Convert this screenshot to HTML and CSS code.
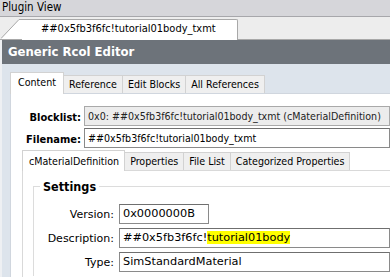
FILE: index.html
```html
<!DOCTYPE html>
<html lang="en">

<head>
    <meta charset="UTF-8">
    <title>Plugin View</title>
    <link rel="stylesheet" href="styles.css">
</head>

<body>
    <div class="plugin-title">Plugin View</div>
    <div class="doc-tabs">
        <div class="doc-tab">
            <svg class="doc-tab-slant" width="21" height="20" viewBox="0 0 21 20">
                <polygon points="0,20 18,0.5 21,0.5 21,20" fill="#fff" />
                <polyline points="0,19.5 18,0.5 21,0.5" fill="none" stroke="#a8a8a8" stroke-width="1" />
            </svg>
            <div class="doc-tab-body">##0x5fb3f6fc!tutorial01body_txmt</div>
        </div>
    </div>

    <div class="editor">
        <div class="editor-title">Generic Rcol Editor</div>
        <div class="editor-body">
            <ul class="tabs main-tabs">
                <li class="cur">Content</li>
                <li>Reference</li>
                <li>Edit Blocks</li>
                <li>All References</li>
            </ul>
            <div class="panel">
                <div class="field">
                    <label>Blocklist:</label>
                    <div class="box readonly">0x0: ##0x5fb3f6fc!tutorial01body_txmt (cMaterialDefinition)</div>
                </div>
                <div class="field">
                    <label>Filename:</label>
                    <div class="box">##0x5fb3f6fc!tutorial01body_txmt</div>
                </div>

                <ul class="tabs sub-tabs">
                    <li class="cur">cMaterialDefinition</li>
                    <li>Properties</li>
                    <li>File List</li>
                    <li>Categorized Properties</li>
                </ul>
                <div class="sub-panel">
                    <fieldset class="group">
                        <legend>Settings</legend>
                        <div class="row">
                            <span class="row-label">Version:</span>
                            <div class="box short">0x0000000B</div>
                        </div>
                        <div class="row">
                            <span class="row-label">Description:</span>
                            <div class="box">##0x5fb3f6fc!<span class="hl">tutorial01body</span></div>
                        </div>
                        <div class="row">
                            <span class="row-label">Type:</span>
                            <div class="box">SimStandardMaterial</div>
                        </div>
                    </fieldset>
                </div>
            </div>
        </div>
    </div>
</body>

</html>
```

FILE: styles.css
```css
* {
    box-sizing: border-box;
}

html,
body {
    margin: 0;
    padding: 0;
    overflow: hidden;
}

body {
    width: 390px;
    height: 277px;
    background-color: #eef0f3;
    font-family: "DejaVu Sans Condensed", "DejaVu Sans", sans-serif;
    font-size: 10.6px;
    color: #000;
}

/* top strip */
.plugin-title {
    height: 17px;
    line-height: 15px;
    padding-left: 2px;
    font-size: 11.5px;
    background-color: #d6d6da;
    border-bottom: 1px solid #a7a7ab;
}

.doc-tabs {
    height: 23px;
    padding-top: 2px;
    background-color: #ededed;
    border-bottom: 1px solid #a8a8a8;
    display: flex;
}

.doc-tab {
    display: flex;
    height: 21px;
    margin-bottom: -1px;
}

.doc-tab-slant {
    display: block;
    margin-left: 1px;
}

.doc-tab-body {
    width: 216px;
    background-color: #fff;
    border-top: 1px solid #a8a8a8;
    border-right: 1px solid #a8a8a8;
    border-top-right-radius: 2px;
    padding-left: 19px;
    line-height: 18px;
    font-size: 11px;
}

/* editor */
.editor {
    margin-left: 2px;
}

.editor-title {
    height: 24px;
    line-height: 24px;
    padding-left: 6px;
    background-color: #6d737a;
    color: #fff;
    font-weight: bold;
    font-size: 13px;
}

.editor-body {
    height: 213px;
    background-color: #dde4ec;
    padding: 8px 0 0 8px;
}

.tabs {
    margin: 0;
    padding: 0;
    list-style-type: none;
    display: flex;
    align-items: flex-end;
    position: relative;
    z-index: 1;
}

.tabs li {
    height: 18px;
    line-height: 16px;
    padding: 0 5px;
    background-color: #efefef;
    border: 1px solid #d2d2d2;
    border-bottom: none;
    margin-right: -1px;
}

.tabs li.cur {
    height: 22px;
    line-height: 19px;
    background-color: #fff;
    margin-bottom: -1px;
    padding: 0 6px 0 7px;
}

.main-tabs li.cur {
    width: 54px;
}

.panel {
    background-color: #fff;
    border: 1px solid #d0d6de;
    border-right: none;
    height: 193px;
    padding: 12px 0 0 0;
}

.field {
    display: flex;
    align-items: center;
    margin-bottom: 2px;
}

.field label {
    width: 73px;
    text-align: right;
    font-weight: bold;
    font-size: 11px;
    padding-right: 3px;
    padding-top: 2px;
}

.box {
    flex: 1;
    height: 20px;
    line-height: 18px;
    padding-left: 3px;
    border: 1px solid #8a8a8a;
    border-top-color: #6f6f6f;
    background-color: #fff;
    white-space: nowrap;
    overflow: hidden;
}

.box.readonly {
    background-color: #ececec;
    border-color: #a9a9a9;
    color: #222;
}

.box.short {
    flex: none;
    width: 90px;
}

.hl {
    background-color: #ffff00;
}

.sub-tabs {
    margin-top: 2px;
    margin-left: 11px;
}

.sub-tabs li {
    height: 18px;
    line-height: 17px;
}

.sub-tabs li.cur {
    height: 21px;
    line-height: 20px;
    padding: 0 5px 0 6px;
}

.sub-panel {
    margin-left: 11px;
    border-top: 1px solid #d9d9d9;
    border-left: 1px solid #d9d9d9;
    height: 120px;
    padding: 8px 0 0 10px;
}

.group {
    margin: 0;
    padding: 10px 0 0 0;
    border: 1px solid #dcdcdc;
    border-right: none;
    border-bottom: none;
    font-family: "DejaVu Sans", sans-serif;
    font-size: 11.3px;
}

.group legend {
    margin-left: 6px;
    padding: 0 3px;
    font-family: "DejaVu Sans Condensed", "DejaVu Sans", sans-serif;
    font-weight: bold;
    font-size: 12.5px;
}

.row {
    display: flex;
    align-items: center;
    margin-bottom: 4px;
}

.row-label {
    width: 85px;
    text-align: right;
    font-size: 11px;
    padding-right: 5px;
    padding-top: 1px;
}
```
